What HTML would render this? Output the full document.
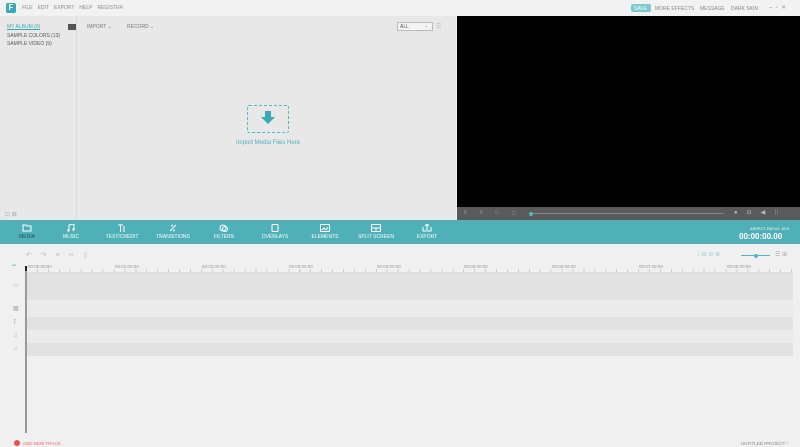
<!DOCTYPE html>
<html><head><meta charset="utf-8"><style>
*{margin:0;padding:0;box-sizing:border-box}
body{width:800px;height:447px;overflow:hidden;background:#f0f0f0;font-family:"Liberation Sans",sans-serif;position:relative;color:#666}
.a{position:absolute}
.t{font-size:5px;white-space:nowrap}
.nav span{margin-right:5px}
.tab{position:absolute;top:220px;height:24px;text-align:center;color:#fff;font-size:5px}
.tab svg{display:block;margin:4px auto 2px}
</style></head><body>
<div class="a" style="left:0;top:0;width:800px;height:16px;background:#f2f2f2"></div>
<div class="a" style="left:6px;top:3px;width:10px;height:10px;background:#3aa9b6;border-radius:2px;color:#fff;font-size:8px;font-weight:bold;text-align:center;line-height:10px">F</div>
<div class="a t nav" style="left:22px;top:5px;color:#888"><span>FILE</span><span>EDIT</span><span>EXPORT</span><span>HELP</span><span>REGISTER</span></div>
<div class="a" style="left:631px;top:4px;width:20px;height:8px;background:#7ccad0;border-radius:2px"></div>
<div class="a t" style="left:634px;top:5.5px;color:#fff">SAVE</div>
<div class="a t" style="left:655px;top:5.5px;color:#888">MORE EFFECTS</div>
<div class="a t" style="left:700px;top:5.5px;color:#888">MESSAGE</div>
<div class="a t" style="left:731px;top:5.5px;color:#888">DARK SKIN</div>
<div class="a t" style="left:769px;top:4px;color:#999;font-size:6px">–&nbsp;&nbsp;▫&nbsp;&nbsp;✕</div>
<div class="a" style="left:0;top:16px;width:456px;height:204px;background:#e8e8e8"></div>
<div class="a" style="left:76px;top:16px;width:1px;height:204px;background:#ddd"></div>
<div class="a t" style="left:7px;top:24px;color:#3aa9b6;text-decoration:underline">MY ALBUM (0)</div>
<div class="a t" style="left:7px;top:33px;color:#555">SAMPLE COLORS (13)</div>
<div class="a t" style="left:7px;top:41px;color:#555">SAMPLE VIDEO (9)</div>
<div class="a" style="left:68px;top:24px;width:8px;height:6px;background:#555"></div>
<div class="a t" style="left:87px;top:24px;color:#777">IMPORT ⌄</div>
<div class="a t" style="left:127px;top:24px;color:#777">RECORD ⌄</div>
<div class="a" style="left:397px;top:22px;width:36px;height:9px;border:1px solid #bbb;background:#f4f4f4"></div>
<div class="a t" style="left:400px;top:24px;color:#555">ALL</div>
<div class="a t" style="left:424px;top:23px;color:#999">⌄</div>
<div class="a t" style="left:436px;top:23px;color:#bbb;font-size:6px">☰</div>
<div class="a" style="left:247px;top:105px;width:42px;height:28px;border:1.5px dashed #4fb8c2;border-radius:2px"></div>
<svg class="a" style="left:261px;top:111px" width="14" height="15"><rect x="4" y="0" width="6" height="7" fill="#3aa9b6"/><polygon points="0,6 14,6 7,13" fill="#3aa9b6"/></svg>
<div class="a t" style="left:236px;top:140px;color:#4fb0b8;font-size:6px">Import Media Files Here</div>
<div class="a t" style="left:5px;top:211px;color:#aaa;font-size:6px">⊡ ⊠</div>
<div class="a" style="left:457px;top:16px;width:343px;height:191px;background:#000"></div>
<div class="a" style="left:457px;top:207px;width:343px;height:13px;background:#5a5a5a"></div>
<div class="a t" style="left:464px;top:210px;color:#999;font-size:5px;word-spacing:11px">K X ▷ ◻</div>
<div class="a" style="left:530px;top:213px;width:194px;height:1px;background:#888"></div>
<div class="a" style="left:529px;top:211.5px;width:4px;height:4px;border-radius:50%;background:#4fb8c2"></div>
<div class="a t" style="left:734px;top:209px;color:#bbb;font-size:6px;word-spacing:8px">● ◘ ◀ ⁞⁞</div>
<div class="a" style="left:0;top:220px;width:800px;height:24px;background:#4fb0b8"></div>
<div class="tab" style="left:12px;width:30px;color:#1f4f55"><svg width="10" height="8"><path d="M1 1h3l1 1h4v5H1z" fill="none" stroke="#fff"/></svg>MEDIA</div>
<div class="tab" style="left:56px;width:30px"><svg width="10" height="8"><path d="M3 6V1l5-1v5" fill="none" stroke="#fff"/><circle cx="2.5" cy="6.5" r="1.2" fill="#fff"/><circle cx="7.5" cy="5.5" r="1.2" fill="#fff"/></svg>MUSIC</div>
<div class="tab" style="left:102px;width:40px"><svg width="10" height="8"><path d="M1 1h5M3.5 1v7M7 2v6" stroke="#fff"/></svg>TEXT/CREDIT</div>
<div class="tab" style="left:152px;width:42px"><svg width="10" height="8"><path d="M2 7l6-6M3 2l2-1M5 7l2-1" stroke="#fff"/></svg>TRANSITIONS</div>
<div class="tab" style="left:209px;width:30px"><svg width="10" height="8"><circle cx="4" cy="4" r="3" fill="none" stroke="#fff"/><circle cx="6" cy="5" r="2.5" fill="none" stroke="#fff"/></svg>FILTERS</div>
<div class="tab" style="left:259px;width:32px"><svg width="10" height="8"><rect x="2" y="0.5" width="6" height="7" rx="1" fill="none" stroke="#fff"/></svg>OVERLAYS</div>
<div class="tab" style="left:308px;width:34px"><svg width="10" height="8"><rect x="0.5" y="0.5" width="9" height="7" fill="none" stroke="#fff"/><path d="M2 6l2-2 2 2 2-3" stroke="#fff" fill="none"/></svg>ELEMENTS</div>
<div class="tab" style="left:357px;width:38px"><svg width="10" height="8"><rect x="0.5" y="0.5" width="9" height="7" fill="none" stroke="#fff"/><path d="M0 4h10M5 4v4" stroke="#fff"/></svg>SPLIT SCREEN</div>
<div class="tab" style="left:412px;width:30px"><svg width="10" height="8"><path d="M1 3v4h8V3M5 6V0M3 2l2-2 2 2" fill="none" stroke="#fff"/></svg>EXPORT</div>
<div class="a t" style="left:750px;top:226px;color:#fff;font-size:4px">ASPECT RATIO: 16:9</div>
<div class="a" style="left:739px;top:232px;color:#fff;font-size:8px;font-weight:bold">00:00:00.00</div>
<div class="a t" style="left:26px;top:251px;color:#bbb;font-size:7px;word-spacing:7px">↶ ↷ ≡ ✂ ▯</div>
<div class="a t" style="left:697px;top:251px;color:#8cd0d6;font-size:6px">♪ ⊟ ⊖ ⊕</div>
<div class="a" style="left:741px;top:255px;width:29px;height:1px;background:#4fb8c2"></div>
<div class="a" style="left:754px;top:253.5px;width:4px;height:4px;border-radius:50%;background:#4fb8c2"></div>
<div class="a t" style="left:775px;top:251px;color:#aaa;font-size:6px">☰ ⊞</div>
<div class="a t" style="left:12px;top:263px;color:#4fb0b8;font-size:5px">⚯</div>
<div class="a" style="left:26px;top:272px;width:767px;height:1px;background:#ddd"></div>
<div class="a" style="left:26px;top:269px;width:767px;height:3px;background:repeating-linear-gradient(90deg,#ccc 0 1px,transparent 1px 10.93px)"></div>
<div class="a t" style="top:264px;left:28px;color:#999;font-size:4.5px">00:00:00:00</div>
<div class="a t" style="top:264px;left:115px;color:#999;font-size:4.5px">00:01:00:00</div>
<div class="a t" style="top:264px;left:202px;color:#999;font-size:4.5px">00:02:00:00</div>
<div class="a t" style="top:264px;left:289px;color:#999;font-size:4.5px">00:03:00:00</div>
<div class="a t" style="top:264px;left:377px;color:#999;font-size:4.5px">00:04:00:00</div>
<div class="a t" style="top:264px;left:464px;color:#999;font-size:4.5px">00:05:00:00</div>
<div class="a t" style="top:264px;left:552px;color:#999;font-size:4.5px">00:06:00:00</div>
<div class="a t" style="top:264px;left:639px;color:#999;font-size:4.5px">00:07:00:00</div>
<div class="a t" style="top:264px;left:727px;color:#999;font-size:4.5px">00:08:00:00</div>
<div class="a" style="left:26px;top:273px;width:767px;height:27px;background:#e2e2e2"></div>
<div class="a" style="left:26px;top:300px;width:767px;height:17px;background:#ebebeb"></div>
<div class="a" style="left:26px;top:317px;width:767px;height:13px;background:#e2e2e2"></div>
<div class="a" style="left:26px;top:330px;width:767px;height:13px;background:#ebebeb"></div>
<div class="a" style="left:26px;top:343px;width:767px;height:13px;background:#e2e2e2"></div>
<div class="a t" style="left:13px;top:282px;color:#aaa;font-size:6px">▭</div>
<div class="a t" style="left:13px;top:305px;color:#aaa;font-size:6px">▦</div>
<div class="a t" style="left:13px;top:320px;color:#aaa;font-size:6px">T</div>
<div class="a t" style="left:13px;top:333px;color:#aaa;font-size:6px">♫</div>
<div class="a t" style="left:13px;top:346px;color:#aaa;font-size:6px">♫</div>
<div class="a" style="left:25px;top:270px;width:2px;height:163px;background:#999"></div>
<div class="a" style="left:25px;top:266px;width:2px;height:5px;background:#222"></div>
<div class="a" style="left:14px;top:440px;width:6px;height:6px;border-radius:50%;background:#e84e4e"></div>
<div class="a t" style="left:23px;top:441px;color:#e66;font-size:4.5px">ADD NEW TRACK</div>
<div class="a t" style="left:741px;top:441px;color:#888;font-size:4.5px">UNTITLED PROJECT *</div>
</body></html>
